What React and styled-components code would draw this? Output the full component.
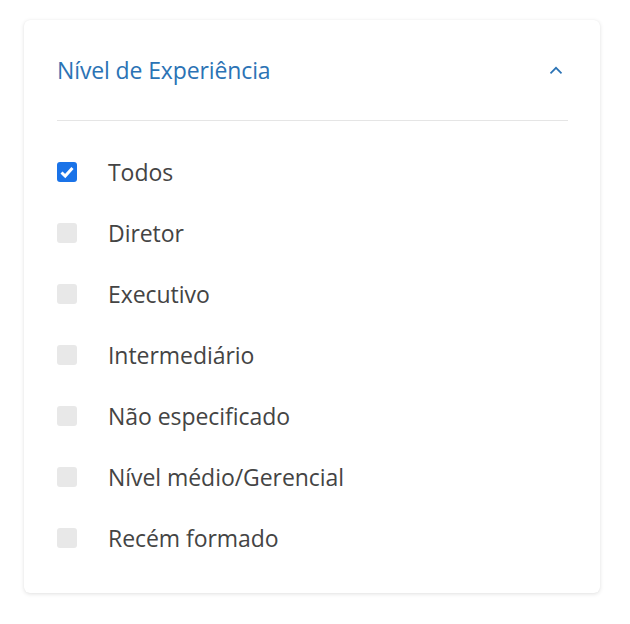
import React, { useState } from "react";
import styled, { createGlobalStyle } from "styled-components";

const Global = createGlobalStyle`
  html, body { margin: 0; padding: 0; background: #ffffff; }
  body { font-family: "Open Sans", "Noto Sans", sans-serif; }
`;

const Page = styled.div`
  padding: 20px 30px 31px 24px;
`;

const Card = styled.section`
  width: 576px;
  background: #fff;
  border-radius: 6px;
  box-shadow: 0 1px 4px rgba(0, 0, 0, 0.12), 0 0 1px rgba(0, 0, 0, 0.06);
  padding: 0 32px 25px 33px;
  box-sizing: border-box;
`;

const Header = styled.div`
  height: 101px;
  display: flex;
  align-items: center;
  justify-content: space-between;
  border-bottom: 1px solid #e5e5e5;
  box-sizing: border-box;
`;

const Title = styled.h2`
  margin: 0;
  font-size: 23px;
  line-height: 30px;
  font-weight: 400;
  color: #2b73b5;
  letter-spacing: -0.12px;
`;

const Toggle = styled.button`
  border: 0;
  background: none;
  padding: 0;
  margin-right: 5px;
  display: flex;
  cursor: pointer;
`;

const List = styled.ul`
  list-style: none;
  margin: 0;
  padding: 20px 0 0;
`;

const Row = styled.li`
  height: 61px;
  display: flex;
  align-items: center;
  gap: 31px;
`;

const Box = styled.span`
  width: 20px;
  height: 20px;
  border-radius: 3px;
  background: ${(p) => (p.$checked ? "#1a73e8" : "#e8e8e8")};
  display: flex;
  align-items: center;
  justify-content: center;
  flex: none;
`;

const Label = styled.span`
  font-size: 23px;
  line-height: 30px;
  color: #444444;
  letter-spacing: -0.05px;
`;

const items = [
  "Todos",
  "Diretor",
  "Executivo",
  "Intermediário",
  "Não especificado",
  "Nível médio/Gerencial",
  "Recém formado",
];

export default function App() {
  const [checked] = useState({ Todos: true });
  return (
    <>
      <Global />
      <Page>
        <Card>
          <Header>
            <Title>Nível de Experiência</Title>
            <Toggle aria-label="Recolher">
              <svg width="14" height="10" viewBox="0 0 14 10">
                <path d="M1.5 8.3 L7 2.8 L12.5 8.3" fill="none" stroke="#2b73b5" strokeWidth="1.7" />
              </svg>
            </Toggle>
          </Header>
          <List>
            {items.map((it) => (
              <Row key={it}>
                <Box $checked={!!checked[it]}>
                  {checked[it] && (
                    <svg width="16" height="14" viewBox="0 0 16 14">
                      <path d="M2.5 7.5 L6.2 11 L13.5 3" fill="none" stroke="#fff" strokeWidth="3" />
                    </svg>
                  )}
                </Box>
                <Label>{it}</Label>
              </Row>
            ))}
          </List>
        </Card>
      </Page>
    </>
  );
}
